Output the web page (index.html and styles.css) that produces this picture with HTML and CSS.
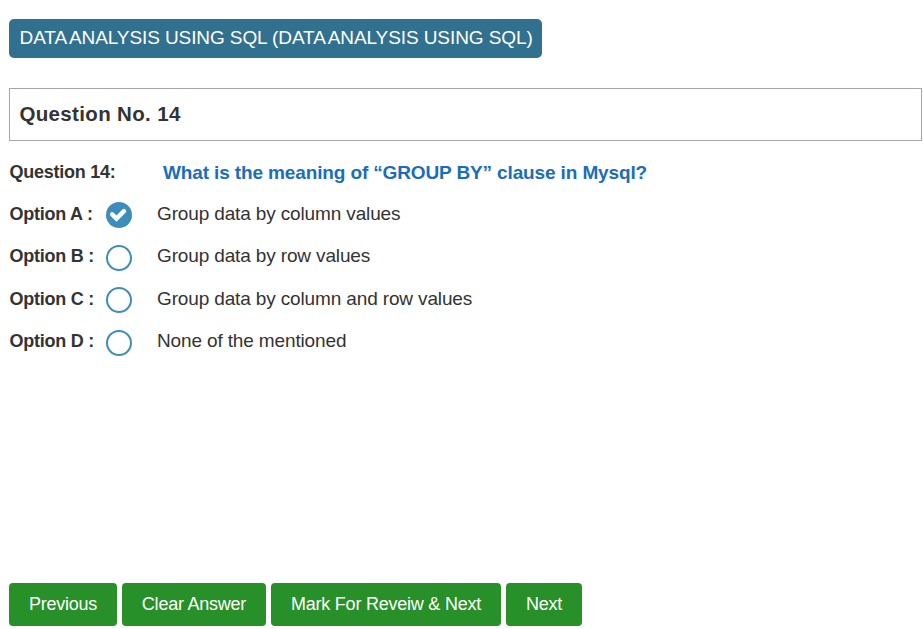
FILE: index.html
```html
<!DOCTYPE html>
<html lang="en">
<head>
<meta charset="utf-8">
<title>Question No. 14</title>
<link rel="stylesheet" href="styles.css">
</head>
<body>
<main class="page">
  <h1 class="subject"><span class="tight">DATA </span>ANALYSIS USING SQL (<span class="tight">DATA </span>ANALYSIS USING SQL)</h1>
  <h2 class="heading">Question No. 14</h2>
  <section class="question">
    <div class="prompt"><span class="label">Question 14:</span><span class="prompt-text">What is the meaning of “GROUP BY” clause in Mysql?</span></div>
    <div class="option"><span class="label">Option A :</span><span class="radio checked"><svg viewBox="0 0 26 26" width="26" height="26"><path d="M6.2 12.4 10.5 16.6 18 9.1" fill="none" stroke="#fff" stroke-width="4.4" stroke-linecap="round"/></svg></span><span class="answer">Group data by column values</span></div>
    <div class="option"><span class="label">Option B :</span><span class="radio"></span><span class="answer">Group data by row values</span></div>
    <div class="option"><span class="label">Option C :</span><span class="radio"></span><span class="answer">Group data by column and row values</span></div>
    <div class="option"><span class="label">Option D :</span><span class="radio"></span><span class="answer">None of the mentioned</span></div>
  </section>
  <nav class="actions">
    <button class="previous">Previous</button>
    <button class="clear">Clear Answer</button>
    <button class="mark">Mark For Reveiw &amp; Next</button>
    <button class="next">Next</button>
  </nav>
</main>
</body>
</html>
```
FILE: styles.css
```css
* { box-sizing: border-box; }
body {
  margin: 0;
  background: #fff;
  color: #333;
  font-family: "Liberation Sans", Arial, sans-serif;
  font-size: 18px;
}
.page {
  height: 629px;
  padding: 19px 2px 3px 9px;
  display: flex;
  flex-direction: column;
}
.subject {
  width: 533px;
  height: 39px;
  margin: 0 0 30px;
  padding: 7px 0 0 10.5px;
  border-radius: 5px;
  background: #31708f;
  color: #fff;
  font-size: 19px;
  font-weight: 400;
  line-height: 23px;
  letter-spacing: -.09px;
  white-space: nowrap;
}
.tight { word-spacing: -2.2px; }
.heading {
  height: 53px;
  margin: 0 0 10px;
  padding: 13px 9.4px;
  border: 1px solid #aaa5a8;
  font-size: 20.5px;
  line-height: 24px;
  letter-spacing: .35px;
}
.prompt {
  display: flex;
  height: 41.9px;
  line-height: 42px;
}
.label { padding-left: .4px; font-weight: 700; letter-spacing: -.24px; white-space: nowrap; }
.prompt .label { width: 154px; }
.prompt-text { padding-top: 1px; color: #1a6dbb; font-size: 19px; font-weight: 700; letter-spacing: -.13px; white-space: nowrap; }
.option {
  display: grid;
  grid-template-columns: 97px 51px auto;
  height: 42.5px;
  line-height: 42px;
}
.radio {
  width: 26px;
  height: 26px;
  margin-top: 9.35px;
  border: 2px solid #3d8dbc;
  border-radius: 50%;
}
.checked { border: 0; background: #3d8dbc; }
.checked svg { display: block; }
.answer { font-size: 19px; letter-spacing: -.14px; white-space: nowrap; }
.actions { display: flex; gap: 5px; margin-top: auto; }
button {
  height: 43px;
  padding: 0;
  border: 0;
  border-radius: 4px;
  background: #289028;
  color: #fff;
  font: 18px "Liberation Sans", Arial, sans-serif;
  letter-spacing: -.23px;
  white-space: nowrap;
}
.previous { width: 108px; }
.clear { width: 144px; }
.mark { width: 230px; }
.next { width: 76px; }
```
